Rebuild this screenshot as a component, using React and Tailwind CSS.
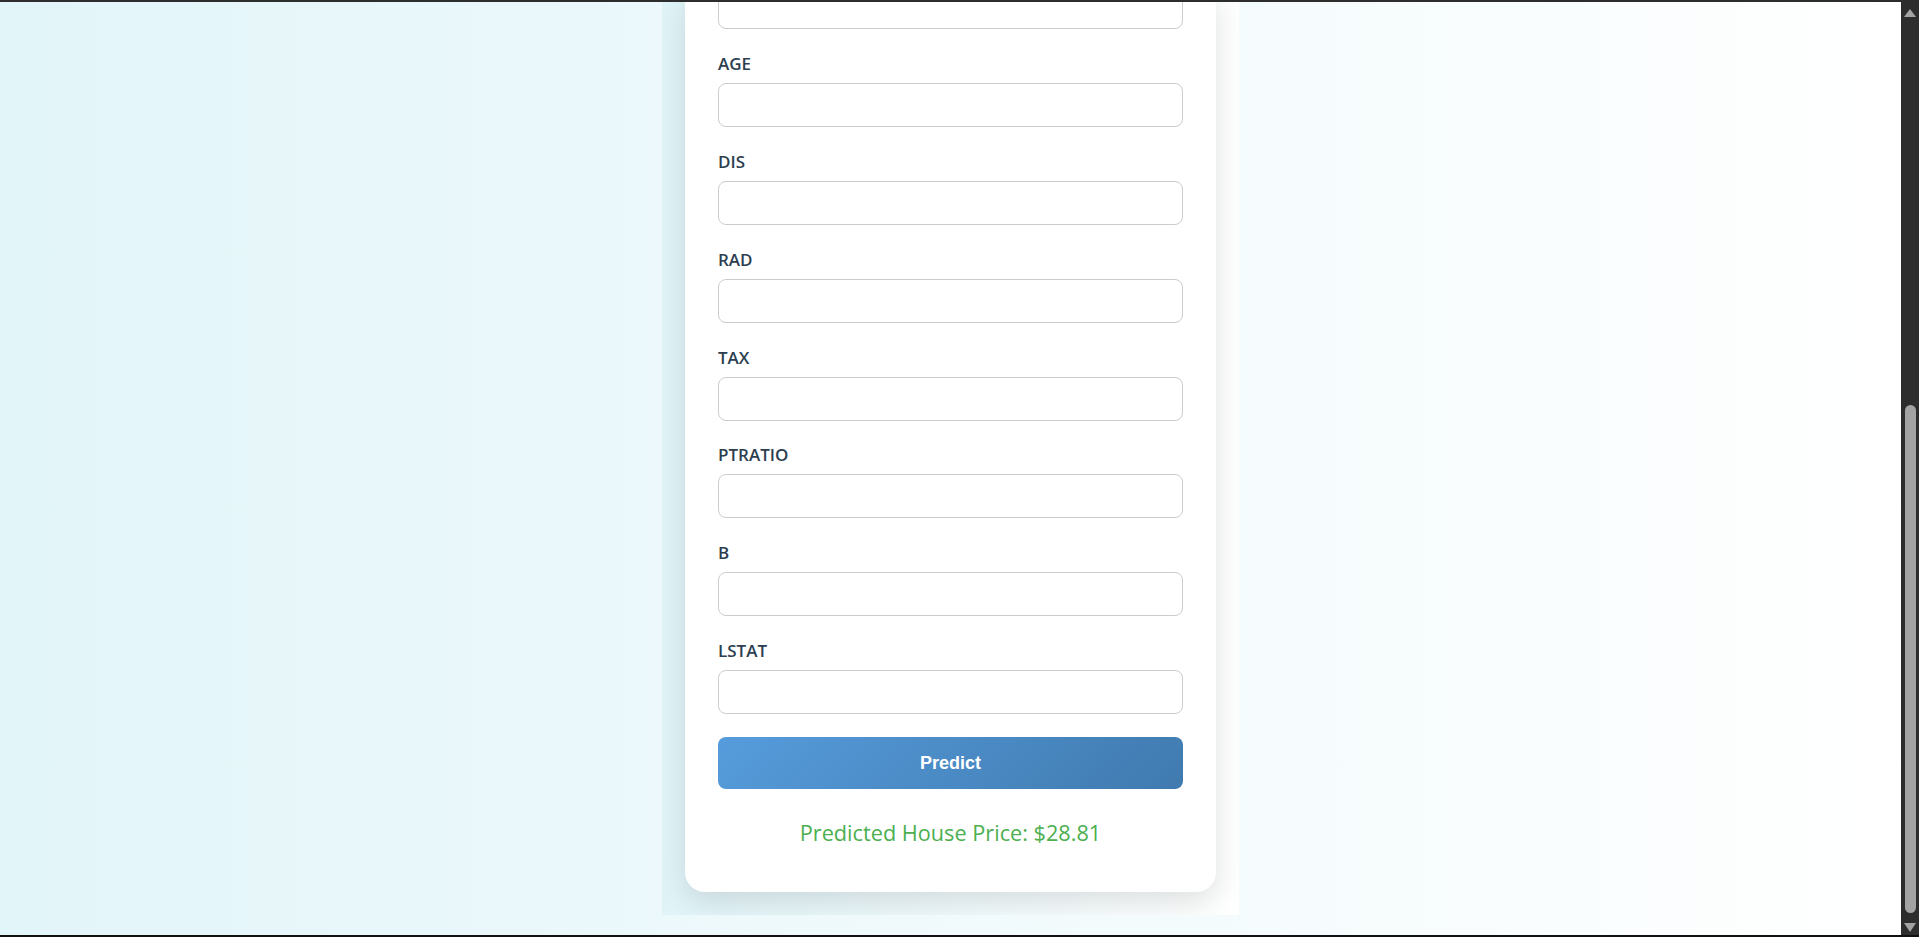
import { useState } from 'react';

const FIELDS = ['AGE', 'DIS', 'RAD', 'TAX', 'PTRATIO', 'B', 'LSTAT'];

const inputCls =
  'h-[44px] w-full rounded-lg border border-[#cccccc] bg-white px-3 text-[16px] text-[#333] outline-none';

function Scrollbar() {
  return (
    <div className="flex h-full w-[18px] flex-col items-center bg-[#2d2d2d] pt-[7px] pb-[3px]">
      <svg width="12" height="8" viewBox="0 0 12 8" className="shrink-0">
        <polygon points="6,0 12,8 0,8" fill="#a3a3a3" />
      </svg>
      <div className="flex-1" />
      <div className="h-[508px] w-[11px] shrink-0 rounded-full bg-[#a3a3a3]" />
      <svg width="12" height="9" viewBox="0 0 12 9" className="mt-[10px] shrink-0">
        <polygon points="0,0 12,0 6,9" fill="#a3a3a3" />
      </svg>
    </div>
  );
}

export default function App() {
  const [values, setValues] = useState({});

  const update = (name, v) => setValues((prev) => ({ ...prev, [name]: v }));

  return (
    <div className="flex h-[937px] w-[1919px] flex-col overflow-hidden bg-[#2d2d2d] font-['Open_Sans','Noto_Sans',sans-serif]">
      <div className="h-[2px] shrink-0" />
      <div className="flex h-[933px] shrink-0">
        <main className="flex h-full w-[1901px] flex-col justify-end overflow-hidden bg-linear-to-r from-[#e2f5f9] to-white pb-[20px]">
          {/* page container, scrolled to the bottom */}
          <div className="mx-auto flex w-[577px] shrink-0 flex-col items-center overflow-hidden bg-linear-to-r from-[#e0f4f8] to-white px-[23px]">
            <form
              className="mb-[23px] flex w-[531px] flex-col rounded-[20px] bg-white px-[33px] pb-[43px] shadow-[0_10px_30px_rgba(0,0,0,0.12)]"
              onSubmit={(e) => e.preventDefault()}
            >
              <input
                aria-label="RM"
                className={inputCls}
                value={values.RM || ''}
                onChange={(e) => update('RM', e.target.value)}
              />
              {FIELDS.map((f) => (
                <div key={f} className="mt-[22.8px] flex flex-col">
                  <label className="mb-[7px] h-6 text-[17px] font-semibold leading-6 text-[#2c3e50]">
                    {f}
                  </label>
                  <input
                    className={inputCls}
                    value={values[f] || ''}
                    onChange={(e) => update(f, e.target.value)}
                  />
                </div>
              ))}
              <button
                type="submit"
                className="mt-[23px] h-[52px] rounded-lg bg-linear-135 from-[#569cdc] to-[#407aaf] font-['Liberation_Sans',Arial,sans-serif] text-[18px] font-bold text-white"
              >
                Predict
              </button>
              <p className="mt-[28px] text-center text-[21.7px] leading-8 text-[#4caf50]">
                Predicted House Price: $28.81
              </p>
            </form>
          </div>
        </main>
        <Scrollbar />
      </div>
      <div className="h-[2px] shrink-0 bg-[#111111]" />
    </div>
  );
}
